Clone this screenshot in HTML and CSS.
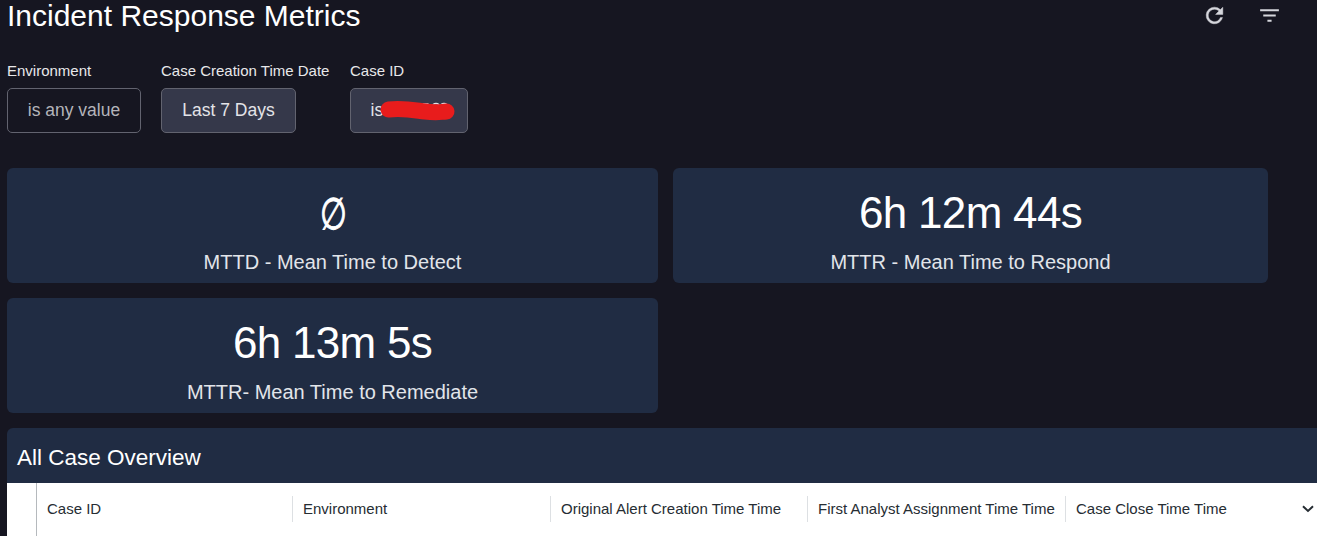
FILE: index.html
```
<!DOCTYPE html>
<html lang="en">
<head>
    <meta charset="UTF-8">
    <meta name="viewport" content="width=device-width, initial-scale=1.0">
    <title>Incident Response Metrics</title>
    <link rel="stylesheet" href="styles.css">
</head>
<body>

<header class="topbar">
    <h1>Incident Response Metrics</h1>
    <div class="actions">
        <button class="icon-btn" aria-label="Refresh">
            <svg width="25" height="25" viewBox="0 0 24 24"><path stroke="#d5d6dc" stroke-width=".4" d="M17.65 6.35A7.96 7.96 0 0 0 12 4a8 8 0 1 0 7.73 10h-2.08A6 6 0 1 1 12 6c1.66 0 3.14.69 4.22 1.78L13 11h7V4z"/></svg>
        </button>
        <button class="icon-btn" aria-label="Filters">
            <svg width="25" height="25" viewBox="0 0 24 24"><path d="M10 18h4v-2h-4v2zM3 6v2h18V6H3zm3 7h12v-2H6v2z"/></svg>
        </button>
    </div>
</header>

<section class="filters">
    <div class="filter environment">
        <label>Environment</label>
        <button class="chip">is any value</button>
    </div>
    <div class="filter date">
        <label>Case Creation Time Date</label>
        <button class="chip filled">Last 7 Days</button>
    </div>
    <div class="filter case-id">
        <label>Case ID</label>
        <button class="chip filled">is
            <svg class="marker" width="78" height="24" viewBox="0 0 78 24">
                <path class="digits" d="M44 5h5M54 5.500q3-2 6 0M62 5.500q3-2 6 0"/>
                <path class="stroke" d="M9.500 10.500C25 9 34 11 46 12.500S60 13 67.500 12.500"/>
            </svg>
        </button>
    </div>
</section>

<section class="tiles">
    <div class="tile">
        <div class="value empty">&empty;</div>
        <div class="title">MTTD - Mean Time to Detect</div>
    </div>
    <div class="tile">
        <div class="value">6h 12m 44s</div>
        <div class="title">MTTR - Mean Time to Respond</div>
    </div>
    <div class="tile">
        <div class="value">6h 13m 5s</div>
        <div class="title">MTTR- Mean Time to Remediate</div>
    </div>
</section>

<section class="overview">
    <h2>All Case Overview</h2>
    <div class="table-head">
        <div class="row-number"></div>
        <div class="col">Case ID</div>
        <div class="col">Environment</div>
        <div class="col">Original Alert Creation Time Time</div>
        <div class="col">First Analyst Assignment Time Time</div>
        <div class="col last">Case Close Time Time
            <svg width="12" height="8" viewBox="0 0 12 8"><path d="M1 1.300L6 6l5-4.700"/></svg>
        </div>
    </div>
</section>

</body>
</html>
```

FILE: styles.css
```
*{
    box-sizing: border-box;
}

body{
    margin: 0;
    height: 536px;
    overflow: hidden;
    background-color: #161621;
    color: #fff;
    font-family: "Liberation Sans", Arial, sans-serif;
}

h1, h2{
    margin: 0;
    font-weight: 400;
}

.topbar{
    height: 32px;
    padding: 0 35px 0 7px;
    display: flex;
    justify-content: space-between;
    align-items: center;
}

h1{
    font-size: 30px;
    line-height: 32px;
}

.actions{
    display: flex;
    gap: 30px;
    margin-top: -1px;
}

.icon-btn{
    display: flex;
    padding: 0;
    border: 0;
    background: none;
}

.icon-btn svg{
    fill: #d5d6dc;
}

.filters{
    display: flex;
    margin: 30px 0 35px 7px;
}

.filter{
    display: flex;
    flex-direction: column;
    align-items: flex-start;
}

.environment{
    width: 154px;
}

.date{
    width: 189px;
}

.filter label{
    font-size: 15px;
    line-height: 18px;
    margin-bottom: 8px;
    color: #e8e8ea;
    white-space: nowrap;
}

.chip{
    width: 134px;
    height: 45px;
    padding: 0;
    border: 1px solid #62636f;
    border-radius: 5px;
    background: none;
    color: #b4b4ba;
    font-family: inherit;
    font-size: 17.5px;
}

.chip.filled{
    width: 135px;
    background-color: #35384a;
    color: #e4e4e8;
}

.case-id .chip{
    position: relative;
    width: 118px;
    padding-left: 19.5px;
    text-align: left;
}

/* scribble drawn over the case number */
.marker{
    position: absolute;
    left: 28px;
    top: 10px;
    fill: none;
    stroke-linecap: round;
}

.digits{
    stroke: #e4e4e8;
    stroke-width: 1.5;
}

.stroke{
    stroke: #e81c1c;
    stroke-width: 16;
}

.tiles{
    display: grid;
    grid-template-columns: 651px 595px;
    grid-auto-rows: 115px;
    gap: 15px;
    margin-left: 7px;
}

.tile{
    padding-top: 20px;
    border-radius: 6px;
    background-color: #202c43;
    text-align: center;
}

.value{
    font-size: 44px;
    line-height: 50px;
    letter-spacing: -0.7px;
}

/* the stock symbol is too wide and thin next to the digits */
.empty{
    font-family: "DejaVu Sans", sans-serif;
    letter-spacing: 0;
    transform: translate(1px, 1px) scaleX(0.7);
    -webkit-text-stroke: 1px #fff;
}

.title{
    margin-top: 12px;
    font-size: 20px;
    line-height: 24px;
    color: #e2e5ea;
}

.overview{
    margin: 15px 0 0 7px;
    border-radius: 6px 0 0 0;
    overflow: hidden;
    background-color: #202c43;
}

h2{
    height: 55px;
    padding: 3px 0 0 10px;
    font-size: 22.5px;
    line-height: 54px;
}

.table-head{
    height: 53px;
    display: grid;
    grid-template-columns: 30px 256px 258px 257px 258px 1fr;
    align-items: center;
    background-color: #fff;
    color: #262d33;
    font-size: 15px;
}

.row-number{
    height: 100%;
    border-right: 1px solid #b5b9bd;
}

.col{
    height: 26px;
    margin-top: -1px;
    padding-left: 10px;
    border-right: 1px solid #dde0e3;
    line-height: 26px;
    white-space: nowrap;
}

.last{
    display: flex;
    justify-content: space-between;
    align-items: center;
    padding-right: 3px;
    border-right: 0;
}

.last svg{
    fill: none;
    stroke: #262d33;
    stroke-width: 2;
}
```
